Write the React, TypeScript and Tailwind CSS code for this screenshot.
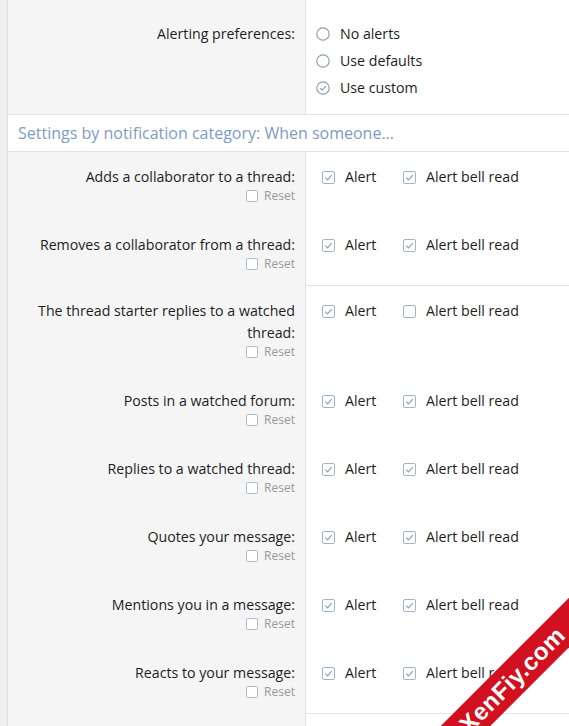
const font = { fontFamily: '"Open Sans", "Noto Sans", sans-serif' };

type Row = { label: string[]; bell: boolean; last?: boolean };

const rows: Row[] = [
  { label: ['Adds a collaborator to a thread:'], bell: true },
  { label: ['Removes a collaborator from a thread:'], bell: true, last: true },
  { label: ['The thread starter replies to a watched', 'thread:'], bell: false },
  { label: ['Posts in a watched forum:'], bell: true },
  { label: ['Replies to a watched thread:'], bell: true },
  { label: ['Quotes your message:'], bell: true },
  { label: ['Mentions you in a message:'], bell: true },
  { label: ['Reacts to your message:'], bell: true, last: true },
];

const Check = ({ on, size = 13 }: { on: boolean; size?: number }) => (
  <svg width={size} height={size} viewBox="0 0 13 13" className="shrink-0">
    <rect x="0.5" y="0.5" width="12" height="12" rx="1.5" fill="#fff" stroke="#9fb3cd" />
    {on && <path d="M3.3 6.6 L5.5 8.8 L9.8 4.2" fill="none" stroke="#86a0c2" strokeWidth="1.2" />}
  </svg>
);

const Radio = ({ on }: { on: boolean }) => (
  <svg width="14" height="14" viewBox="0 0 14 14" className="shrink-0">
    <circle cx="7" cy="7" r="6.2" fill="#fff" stroke="#8e9fb8" strokeWidth="1.2" />
    {on && <path d="M4.2 7.2 L6.2 9.1 L9.9 5.2" fill="none" stroke="#8e9fb8" strokeWidth="1.2" />}
  </svg>
);

export default function App() {
  return (
    <div className="relative h-[726px] overflow-hidden bg-white text-[14.2px] text-[#1d1d1d]" style={font}>
      <div className="flex h-full">
        <div className="w-[8px] shrink-0 bg-[#efefef] border-r border-[#dedede]" />
        <div className="flex-1 flex flex-col">
          {/* alerting preferences */}
          <div className="flex h-[115px] border-b border-[#e4e4e4]">
            <div className="w-[298px] shrink-0 bg-[#f5f5f5] border-r border-[#e2e2e2] text-right pr-[10px] pt-5 leading-[27px]">
              Alerting preferences:
            </div>
            <div className="flex-1 pl-[10px] pt-5 leading-[27px]">
              {['No alerts', 'Use defaults', 'Use custom'].map((t, i) => (
                <div key={t} className="flex items-center gap-[10px]">
                  <Radio on={i === 2} />
                  <span>{t}</span>
                </div>
              ))}
            </div>
          </div>

          {/* header */}
          <div className="h-[37px] border-b border-[#e4e4e4] flex items-center pl-[10px] text-[16px] text-[#7e9cc2]">
            Settings by notification category: When someone...
          </div>

          {rows.map((r, i) => (
            <div key={i} className="flex">
              <div
                className={`w-[298px] shrink-0 bg-[#f5f5f5] border-r border-[#e2e2e2] text-right pr-[10px] pt-[14px] ${
                  r.last ? 'pb-[14px]' : 'pb-[16px]'
                }`}
              >
                {r.label.map((l) => (
                  <div key={l} className="leading-[22px]">{l}</div>
                ))}
                <div className="flex items-center justify-end gap-[6px] h-[16px] text-[12px] text-[#999999]">
                  <Check on={false} size={12} />
                  <span>Reset</span>
                </div>
              </div>
              <div className={`flex-1 pl-4 pt-[14px] ${r.last ? 'border-b border-[#e4e4e4]' : ''}`}>
                <div className="flex items-center h-[22px]">
                  <Check on />
                  <span className="ml-[10px] w-[58px]">Alert</span>
                  <Check on={r.bell} />
                  <span className="ml-[10px]">Alert bell read</span>
                </div>
              </div>
            </div>
          ))}
          <div className="flex flex-1">
            <div className="w-[298px] shrink-0 bg-[#f5f5f5] border-r border-[#e2e2e2]" />
            <div className="flex-1" />
          </div>
        </div>
      </div>

      {/* watermark ribbon */}
      <div className="absolute left-[362px] top-[662px] w-[300px] h-[35px] -rotate-45 bg-[#d3101f] flex items-center justify-center">
        <span className="text-white font-bold text-[24px] tracking-[0.5px]" style={{ fontFamily: '"Liberation Sans", Arial, sans-serif' }}>
          XenFiy.com
        </span>
      </div>
    </div>
  );
}
